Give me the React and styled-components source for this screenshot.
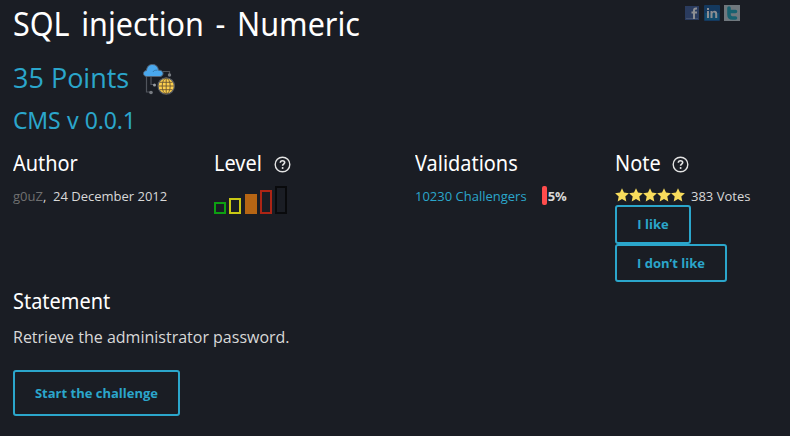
import React from "react";
import styled, { createGlobalStyle } from "styled-components";

const accent = "#2ba6cb";

const GlobalStyle = createGlobalStyle`
  * { box-sizing: border-box; }
  body {
    margin: 0;
    background: #1a1d24;
    color: #d8d8d8;
    font-family: "Open Sans", "Noto Sans", sans-serif;
    font-size: 13px;
    line-height: 20px;
  }
  h1, h2, h3, h4, p { margin: 0; font-weight: 400; }
`;

const Page = styled.main`
  height: 436px;
  padding: 0 0 0 13px;
  overflow: hidden;
`;

const Header = styled.header`
  display: flex;
  justify-content: space-between;
  height: 57px;
`;

const Title = styled.h1`
  color: #fff;
  font-family: "Noto Sans", sans-serif;
  font-size: 33px;
  line-height: 48px;
  word-spacing: 4px;
  white-space: nowrap;
  transform: scaleX(0.925);
  transform-origin: left;
`;

const ShareLinks = styled.nav`
  display: flex;
  gap: 4px;
  padding: 5px 50px 0 0;
  opacity: 0.5;
`;

const Points = styled.h2`
  display: flex;
  align-items: center;
  gap: 13px;
  height: 42px;
  color: ${accent};
  font-size: 27px;
  line-height: 42px;

  svg { margin-top: 2px; }
`;

const Subtitle = styled.h3`
  height: 50px;
  color: ${accent};
  font-family: "Noto Sans", sans-serif;
  font-size: 23px;
  line-height: 43px;
  letter-spacing: -0.2px;
  word-spacing: 0.7px;
`;

const Facts = styled.section`
  display: grid;
  grid-template-columns: 201px 201px 200px 1fr;
  height: 137px;
`;

const Fact = styled.div`
  min-width: 0;
`;

const SectionTitle = styled.h4`
  display: flex;
  align-items: center;
  gap: 8px;
  height: 30px;
  color: #fff;
  font-family: "Noto Sans", sans-serif;
  font-size: 21.5px;
  line-height: 30px;
`;

const Label = styled.span`
  display: block;
  padding-bottom: ${(p) => (p.$raised ? 2 : 0)}px;
  transform: scaleX(0.927);
  transform-origin: left;
`;

const Line = styled.div`
  display: flex;
  align-items: center;
  height: 20px;
  margin-top: 7px;
  white-space: pre;
`;

const Muted = styled.span`
  color: #707070;
`;

const Link = styled.a`
  color: ${accent};
`;

const Levels = styled.div`
  display: flex;
  align-items: flex-end;
  gap: 3px;
  height: 28px;
  margin-top: 7px;
`;

const Bar = styled.span`
  width: 12px;
  margin-right: ${(p) => p.$after || 0}px;
  height: ${(p) => p.$height}px;
  border: 2px solid ${(p) => p.$color};
  background: ${(p) => (p.$filled ? p.$color : "transparent")};
`;

const Meter = styled.span`
  width: 5px;
  height: 19px;
  margin: -1px 0 0 15px;
  border-radius: 2px;
  background: #ff4c4c;
`;

const Percent = styled.strong`
  margin-left: 1px;
  font-weight: 700;
`;

const Stars = styled.span`
  display: flex;
  margin: -3px 6px 0 0;
`;

const Votes = styled.div`
  display: flex;
  flex-direction: column;
  align-items: flex-start;
  margin-top: -1px;
`;

const Button = styled.button`
  width: ${(p) => p.$width}px;
  height: ${(p) => p.$height}px;
  padding: 0 0 ${(p) => p.$lift || 0}px;
  border: 2px solid ${accent};
  border-radius: 3px;
  background: transparent;
  color: ${accent};
  font: 700 13px/18px "Open Sans", "Noto Sans", sans-serif;
`;

const Statement = styled.section`
  p {
    height: 54px;
    padding-top: 9px;
    font-size: 16px;
    line-height: 24px;
  }
`;

const Help = styled.span`
  display: flex;
  padding-top: 1px;
`;

const HelpIcon = () => (
  <Help>
    <svg width="17" height="17" viewBox="0 0 17 17" fill="none">
      <circle cx="8.5" cy="8.5" r="7.3" stroke="#e4e4e4" strokeWidth="1.4" />
      <path d="M6.3 6.8c0-1.3 1-2.1 2.2-2.1s2.2.8 2.2 1.9c0 1.4-2.1 1.6-2.1 3.1" stroke="#e4e4e4" strokeWidth="1.6" />
      <circle cx="8.6" cy="11.9" r="1" fill="#e4e4e4" />
    </svg>
  </Help>
);

const Star = () => (
  <svg width="14" height="14" viewBox="0 0 14 14">
    <path d="M7 .2l2 4.4 4.900.6-3.600 3.300 1 4.900L7 11l-4.300 2.400 1-4.900L.1 5.200 5 4.600z" fill="#f8dc5c" />
  </svg>
);

const CloudNetworkIcon = () => (
  <svg width="34" height="34" viewBox="0 0 34 34" fill="none">
    <g stroke="#50545c" strokeWidth="1.2">
      <path d="M4.500 14v16h4M9 14v8.500h4M21 9.500h6.500v3" />
    </g>
    <path d="M4.500 14.500c-4-.2-4-5.700-.1-5.900C5 4.500 7 2.500 10.500 2.500s5.500 2 6 5.700c5.500-.5 6 6 1.500 6.300z" fill="#4aa8ed" stroke="#536273" strokeWidth="1" />
    <path d="M11 10c.5-1.500 2-2 4.500-1.800" stroke="#2f6e9f" strokeWidth=".8" />
    <circle cx="27.500" cy="13" r="1.700" fill="#777b82" />
    <circle cx="12.500" cy="23" r="1.500" fill="#9a9da2" />
    <circle cx="9" cy="30.500" r="1.800" fill="#777b82" />
    <circle cx="24.200" cy="24" r="8.200" fill="#fdd04e" stroke="#555961" strokeWidth="1.200" />
    <g stroke="#6b5733" strokeWidth=".9">
      <path d="M16.500 24h15.500M18 20.300h12.500M18 27.700h12.500M24.200 16v16" />
      <ellipse cx="24.200" cy="24" rx="4" ry="7.800" />
    </g>
  </svg>
);

const FacebookIcon = () => (
  <svg width="16" height="16" viewBox="0 0 16 16">
    <path fill="#3b5998" d="M1 1h14v14H1z" />
    <path fill="#6d84b4" d="M2 13h12v1H2z" />
    <path d="M13 3.500h-1c-1.500 0-2 .7-2 2V14M7.500 7.500H13" fill="none" stroke="#fff" strokeWidth="2" />
  </svg>
);

const LinkedInIcon = () => (
  <svg width="16" height="16" viewBox="0 0 16 16">
    <rect width="16" height="16" rx="1" fill="#10559a" />
    <path fill="#0b79b5" d="M1 8h14v7H1z" />
    <path fill="#fff" d="M3 3h2v2H3zm0 3h2v7H3zm3.500 0h2v1c1.500-2 4.700-1.300 4.700 1.700V13h-2V9c0-2-2.700-2-2.700 0v4h-2z" />
  </svg>
);

const TwitterIcon = () => (
  <svg width="16" height="16" viewBox="0 0 16 16">
    <path fill="#c6d3d8" d="M0 0h16v16H0z" />
    <path d="M5 3v6.500C5 12 6.500 13 8.500 13H11.500M5 6.500h6.500" fill="none" stroke="#18a4bb" strokeWidth="3.600" strokeLinecap="round" />
  </svg>
);

export default function App() {
  return (
    <>
      <GlobalStyle />
      <Page>
        <Header>
          <Title>SQL injection - Numeric</Title>
          <ShareLinks><FacebookIcon /><LinkedInIcon /><TwitterIcon /></ShareLinks>
        </Header>
        <Points>35 Points <CloudNetworkIcon /></Points>
        <Subtitle>CMS v 0.0.1</Subtitle>
        <Facts>
          <Fact>
            <SectionTitle><Label $raised>Author</Label></SectionTitle>
            <Line><Muted>g0uZ</Muted>,  24 December 2012</Line>
          </Fact>
          <Fact>
            <SectionTitle><Label $raised>Level</Label><HelpIcon /></SectionTitle>
            <Levels>
              <Bar $height={12} $color="#0d9f12" />
              <Bar $height={16} $color="#c9c814" $after={1} />
              <Bar $height={20} $color="#b66514" $filled />
              <Bar $height={24} $color="#ad2515" />
              <Bar $height={28} $color="#090a0c" />
            </Levels>
          </Fact>
          <Fact>
            <SectionTitle><Label $raised>Validations</Label></SectionTitle>
            <Line><Link>10230 Challengers</Link><Meter /><Percent>5%</Percent></Line>
          </Fact>
          <Fact>
            <SectionTitle><Label $raised>Note</Label><HelpIcon /></SectionTitle>
            <Line>
              <Stars>{[0, 1, 2, 3, 4].map((n) => <Star key={n} />)}</Stars>
              383 Votes
            </Line>
            <Votes>
              <Button $width={76} $height={39} $lift={2}>I like</Button>
              <Button $width={112} $height={38}>I don’t like</Button>
            </Votes>
          </Fact>
        </Facts>
        <Statement>
          <SectionTitle><Label>Statement</Label></SectionTitle>
          <p>Retrieve the administrator password.</p>
          <Button $width={167} $height={46}>Start the challenge</Button>
        </Statement>
      </Page>
    </>
  );
}
